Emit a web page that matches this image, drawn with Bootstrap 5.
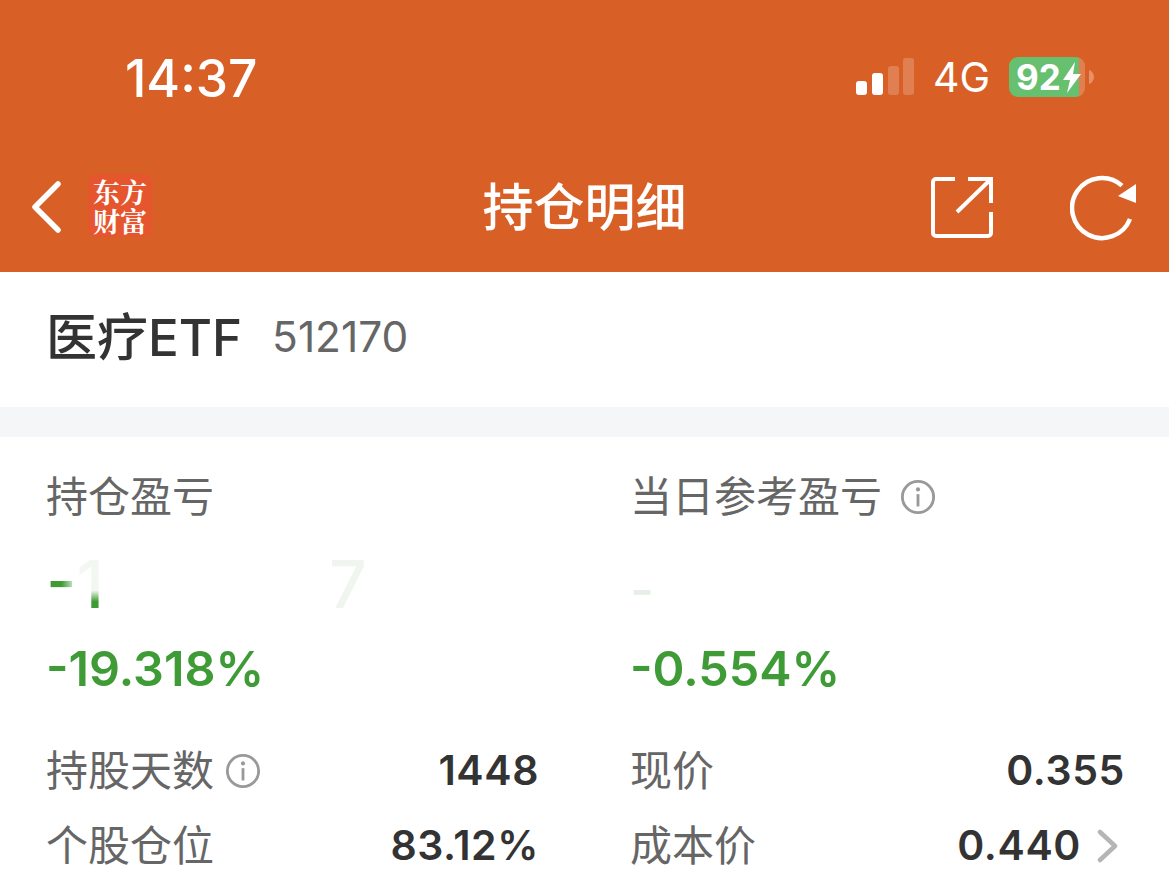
<!DOCTYPE html>
<html lang="zh-CN"><head><meta charset="utf-8">
<link href="https://cdn.jsdelivr.net/npm/bootstrap@5.3.0/dist/css/bootstrap.min.css" rel="stylesheet">
<style>
html,body{height:894px;overflow:hidden;background:#fff}
body{font-family:Inter,"Noto Sans CJK SC","Liberation Sans",sans-serif;color:#333}
.app-head{background:#d86027;height:272px;color:#fff}
.status-row{height:148px;padding:6px 75px 0 125px}
.clock{font-size:51.5px;font-weight:500;line-height:1;padding-top:4px}
.net{font-size:41px;line-height:1;margin:0 19px 0 19px;padding-top:1px}
.bat{width:76px;height:40px;background:linear-gradient(90deg,#67c06f 0,#67c06f 92%,#e27f4f 92%);border-radius:9px;font-size:35px;font-weight:700;line-height:40px;padding-left:7px}
.title-row{height:124px;padding:0 33px 0 31px;position:relative}
.title-txt{position:absolute;left:300px;right:300px;top:26px;text-align:center;font-size:51px;font-weight:500;line-height:68px}
.logo-box{width:64px;height:63px;background:#e5562f;border-radius:8px;font-family:"Noto Serif CJK SC","Noto Sans CJK SC",sans-serif;font-size:27px;font-weight:700;line-height:29px;text-align:center;margin-left:27px;padding-top:3px;margin-top:-3px}
.logo-line{display:block;height:29px}
.fund-row{height:135px;padding:0 46px 4px;gap:30px}
.fund-name{font-size:51px;font-weight:500;line-height:1;color:#333}
.fund-code{font-size:42.400px;color:#666;line-height:1}
.gap-band{height:30px;background:#f5f6f8}
.stats{padding:0 44px 0 46px}
.half-a{width:493px}.half-b{width:495px;margin-left:91px}
.lab{font-size:42px;color:#666;line-height:60px;height:60px;white-space:nowrap}
.top-lab{margin-top:30px}
.mask{height:80px;margin-top:17px;font-size:66px;font-weight:500;line-height:80px;position:relative}
.dash-fade{background:linear-gradient(90deg,#3f9b36 0,#3f9b36 50%,#f2f8f1 100%);-webkit-background-clip:text;background-clip:text;color:transparent}
.one-fade{background:linear-gradient(180deg,#f2f8f1 0,#f2f8f1 58%,#3f9b36 72%);-webkit-background-clip:text;background-clip:text;color:transparent}
.fade2{position:absolute;left:283px;top:0;color:#f0f6ef}
.fade3{color:#e6efe5;font-size:52px}
.pct{font-size:48.500px;font-weight:600;color:#3f9b36;line-height:64px;height:64px;margin-top:13px}
.kv{height:75px;line-height:75px}
.first-kv{margin-top:32px}
.kv .lab{height:75px;line-height:75px}
.val{font-size:41px;font-weight:600;color:#333;letter-spacing:.6px;white-space:nowrap}
</style></head><body>
<div class="app-head">
 <div class="status-row d-flex align-items-center justify-content-between">
  <div class="clock">14:37</div>
  <div class="d-flex align-items-center">
   <svg width="58" height="40" viewBox="0 0 58 40"><rect x="0" y="24" width="11" height="14" rx="3" fill="#fff"/><rect x="16" y="16" width="11" height="22" rx="3" fill="#fff"/><rect x="32" y="9" width="11" height="29" rx="3" fill="#fff" opacity=".2"/><rect x="47" y="1" width="11" height="37" rx="3" fill="#fff" opacity=".2"/></svg>
   <span class="net">4G</span>
   <span class="bat d-block position-relative">92<svg class="position-absolute" style="left:53px;top:5px" width="20" height="31" viewBox="0 0 20 31"><path d="M13 0 1 18h7L5 31 19 12h-8z" fill="#fff"/></svg></span>
   <svg width="5" height="14" viewBox="0 0 5 14" class="ms-1"><path d="M0 0c3 1 5 4 5 7s-2 6-5 7z" fill="#e99068"/></svg>
  </div>
 </div>
 <div class="title-row d-flex align-items-center justify-content-between">
  <div class="d-flex align-items-center" style="margin-top:-6px">
   <svg width="30" height="52" viewBox="0 0 30 52"><path d="M27 3 4 26l23 23" fill="none" stroke="#fff" stroke-width="5.500" stroke-linecap="round" stroke-linejoin="round"/></svg>
   <div class="logo-box"><span class="logo-line">东方</span><span class="logo-line">财富</span></div>
  </div>
  <div class="title-txt">持仓明细</div>
  <div class="d-flex align-items-center" style="margin-top:-5px;gap:75px">
   <svg width="66" height="66" viewBox="0 0 66 66"><path d="M26 4H7a3 3 0 0 0-3 3v51a3 3 0 0 0 3 3h52a3 3 0 0 0 3-3V37" fill="none" stroke="#fff" stroke-width="4"/><path d="M28 37 62 4" stroke="#fff" stroke-width="4" fill="none"/><path d="M39 4h23v24" fill="none" stroke="#fff" stroke-width="4"/></svg>
   <svg width="66" height="66" viewBox="0 0 66 66"><path d="M60 44A30 30 0 1 1 52 10.600" fill="none" stroke="#fff" stroke-width="4.500"/><path d="M66 9v19L48 21z" fill="#fff"/></svg>
  </div>
 </div>
</div>
<div class="fund-row d-flex align-items-center">
 <span class="fund-name">医疗ETF</span><span class="fund-code">512170</span>
</div>
<div class="gap-band"></div>
<div class="stats d-flex">
 <div class="half-a">
  <div class="lab top-lab">持仓盈亏</div>
  <div class="mask"><span class="dash-fade">-</span><span class="one-fade">1</span><span class="fade2">7</span></div>
  <div class="pct">-19.318%</div>
  <div class="kv first-kv d-flex justify-content-between"><span class="lab d-flex align-items-center" style="gap:11px">持股天数<svg width="36" height="36" viewBox="0 0 38 38"><circle cx="19" cy="19" r="16.500" fill="none" stroke="#999" stroke-width="3"/><circle cx="19" cy="11" r="2.200" fill="#999"/><path d="M19 16v13" stroke="#999" stroke-width="3"/></svg></span><span class="val">1448</span></div>
  <div class="kv d-flex justify-content-between"><span class="lab">个股仓位</span><span class="val">83.12%</span></div>
 </div>
 <div class="half-b">
  <div class="lab top-lab d-flex align-items-center" style="gap:18px">当日参考盈亏<svg width="36" height="36" viewBox="0 0 38 38"><circle cx="19" cy="19" r="16.500" fill="none" stroke="#999" stroke-width="3"/><circle cx="19" cy="11" r="2.200" fill="#999"/><path d="M19 16v13" stroke="#999" stroke-width="3"/></svg></div>
  <div class="mask"><span class="fade3">-</span></div>
  <div class="pct">-0.554%</div>
  <div class="kv first-kv d-flex justify-content-between"><span class="lab">现价</span><span class="val">0.355</span></div>
  <div class="kv d-flex justify-content-between"><span class="lab">成本价</span><span class="d-flex align-items-center"><span class="val">0.440</span><svg class="ms-3" width="22" height="34" viewBox="0 0 22 34" style="margin-right:6px"><path d="M3 3l15 14L3 31" fill="none" stroke="#b5b5b5" stroke-width="4.500" stroke-linecap="round" stroke-linejoin="round"/></svg></span></div>
 </div>
</div>
</body></html>
